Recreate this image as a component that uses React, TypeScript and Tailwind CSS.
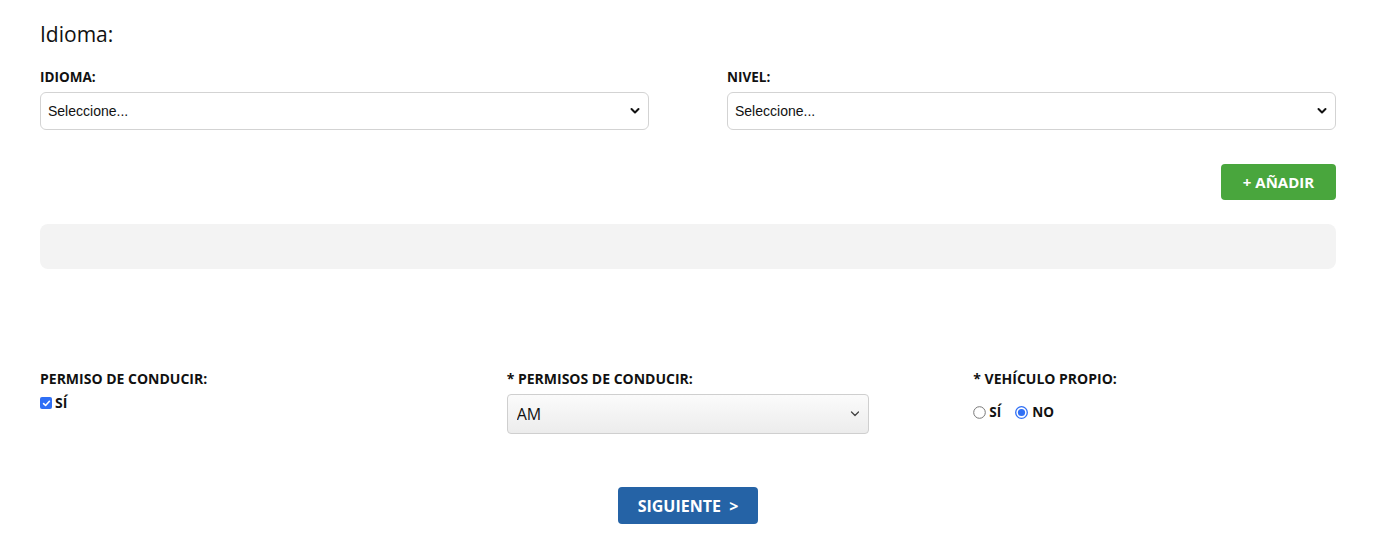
import React from 'react';

const Chevron = ({ bold }: { bold?: boolean }) => (
  <svg width="10" height="7" viewBox="0 0 10 7" className="pointer-events-none absolute right-[8px] top-1/2 -translate-y-1/2">
    <path d="M1.5 1.5 L5 5 L8.5 1.5" fill="none" stroke={bold ? '#111' : '#444'} strokeWidth={bold ? 2 : 1.3} strokeLinecap="round" strokeLinejoin="round" />
  </svg>
);

const SelectBox = ({ value }: { value: string }) => (
  <div className="relative h-[38px] rounded-[6px] border border-[#d3d3d3] bg-white">
    <select
      className="h-full w-full appearance-none bg-transparent pl-[7px] pr-[24px] text-[14px] text-[#111] outline-none"
      style={{ fontFamily: '"Liberation Sans", Arial, sans-serif' }}
      defaultValue=""
    >
      <option value="">{value}</option>
    </select>
    <Chevron bold />
  </div>
);

const Label = ({ children }: { children: React.ReactNode }) => (
  <div className="text-[13.5px] font-bold leading-[16px] text-[#111]">{children}</div>
);

export default function App() {
  return (
    <div className="min-h-[548px] bg-white px-[40px] pt-[20px] text-[#111]" style={{ fontFamily: '"Open Sans", sans-serif' }}>
      <h2 className="text-[21px] leading-[28px] font-normal">Idioma:</h2>

      <div className="mt-[21px] grid grid-cols-2 gap-x-[78px] w-[1296px]">
        <div>
          <Label>IDIOMA:</Label>
          <div className="mt-[7px]">
            <SelectBox value="Seleccione..." />
          </div>
        </div>
        <div>
          <Label>NIVEL:</Label>
          <div className="mt-[7px]">
            <SelectBox value="Seleccione..." />
          </div>
        </div>
      </div>

      <div className="mt-[34px] flex w-[1296px] justify-end">
        <button className="h-[36px] w-[115px] rounded-[4px] bg-[#49a63d] text-[15px] font-bold text-white">
          + AÑADIR
        </button>
      </div>

      <div className="mt-[24px] h-[45px] w-[1296px] rounded-[8px] bg-[#f3f3f3]" />

      <div className="mt-[101px] grid w-[1296px] grid-cols-3 gap-x-[104px]">
        <div>
          <div className="text-[14px] font-bold leading-[18px]">PERMISO DE CONDUCIR:</div>
          <label className="mt-[7px] flex items-center gap-[3px] text-[14px] font-bold leading-[16px]">
            <span className="flex h-[12px] w-[12px] items-center justify-center rounded-[2px] bg-[#2f6ff5]">
              <svg width="9" height="9" viewBox="0 0 9 9">
                <path d="M1.6 4.6 L3.6 6.5 L7.4 2.3" fill="none" stroke="#fff" strokeWidth="1.6" strokeLinecap="round" strokeLinejoin="round" />
              </svg>
            </span>
            SÍ
          </label>
        </div>
        <div>
          <div className="text-[14px] font-bold leading-[18px]">* PERMISOS DE CONDUCIR:</div>
          <div className="relative mt-[6px] h-[40px] rounded-[4px] border border-[#cfcfcf] bg-gradient-to-b from-[#fbfbfb] to-[#ececec]">
            <select className="h-full w-full appearance-none bg-transparent pl-[9px] pr-[24px] text-[16px] text-[#111] outline-none" defaultValue="AM">
              <option value="AM">AM</option>
            </select>
            <Chevron />
          </div>
        </div>
        <div>
          <div className="text-[14px] font-bold leading-[18px]">* VEHÍCULO PROPIO:</div>
          <div className="mt-[15px] flex items-center text-[13.5px] font-bold leading-[18px]">
            <label className="flex items-center gap-[3px]">
              <svg width="13" height="13" viewBox="0 0 13 13">
                <circle cx="6.5" cy="6.5" r="5.8" fill="#fff" stroke="#777" strokeWidth="1" />
              </svg>
              SÍ
            </label>
            <label className="ml-[14px] flex items-center gap-[4px]">
              <svg width="13" height="13" viewBox="0 0 13 13">
                <circle cx="6.5" cy="6.5" r="5.8" fill="#fff" stroke="#2f6ff5" strokeWidth="1.3" />
                <circle cx="6.5" cy="6.5" r="3.6" fill="#2f6ff5" />
              </svg>
              NO
            </label>
          </div>
        </div>
      </div>

      <div className="mt-[53px] flex w-[1296px] justify-center">
        <button className="h-[37px] w-[140px] rounded-[4px] bg-[#2563a6] text-[16px] font-bold text-white">
          SIGUIENTE&nbsp;&nbsp;&gt;
        </button>
      </div>
    </div>
  );
}
